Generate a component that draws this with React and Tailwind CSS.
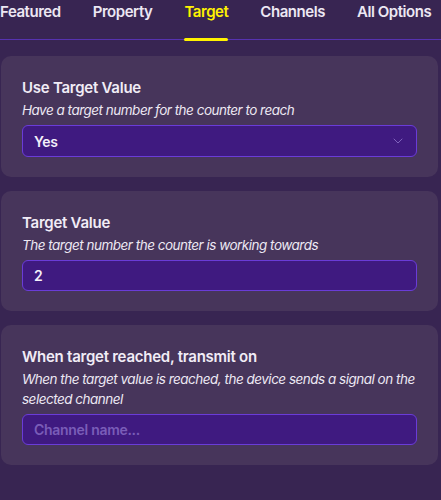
import { ChevronDown } from 'lucide-react'

const TABS = ['Featured', 'Property', 'Target', 'Channels', 'All Options']

function Card({ title, desc, children }) {
  return (
    <div className="mx-[1px] w-[437px] rounded-[10px] bg-[#47355b] px-[21px] pt-[22px] pb-[20px]">
      <h2 className="text-[15px] font-semibold leading-[20px] tracking-[-0.25px] text-[#f1ecf6]">{title}</h2>
      <p className="mt-[2px] text-[13.5px] italic leading-[20px] tracking-[-0.5px] text-[#ede8f3]">{desc}</p>
      <div className="mt-[5px]">{children}</div>
    </div>
  )
}

export default function App() {
  return (
    <div
      className="h-[500px] w-[441px] overflow-hidden bg-[#382552]"
      style={{ fontFamily: 'Inter, "Noto Sans", sans-serif' }}
    >
      {/* tabs */}
      <div className="relative flex h-[40px] gap-[32px] border-b border-[#5632b0] text-[15px] font-semibold tracking-[-0.45px]">
        {TABS.map(t => {
          const on = t === 'Target'
          return (
            <div key={t} className="relative whitespace-nowrap pt-[2px] leading-[20px]">
              <span className={on ? 'text-[#fff200]' : 'text-[#ece7f3]'}>{t}</span>
              {on && <div className="absolute bottom-[-2px] left-0 right-0 h-[3px] rounded-sm bg-[#fff200]" />}
            </div>
          )
        })}
      </div>

      <div className="flex flex-col gap-[14px] pt-[16px]">
        <Card title="Use Target Value" desc="Have a target number for the counter to reach">
          <div className="flex h-[32px] items-center justify-between rounded-[6px] border border-[#6a3cd8] bg-[#3f1a80] pl-[11px] pr-[10px]">
            <span className="text-[14px] font-semibold tracking-[-0.3px] text-[#f4f0fa]">Yes</span>
            <ChevronDown size={16} strokeWidth={1.25} className="text-[#8d71c8]" />
          </div>
        </Card>

        <Card title="Target Value" desc="The target number the counter is working towards">
          <div className="flex h-[31px] items-center rounded-[6px] border border-[#6a3cd8] bg-[#3f1a80] pl-[11px]">
            <span className="text-[14px] font-semibold text-[#f4f0fa]">2</span>
          </div>
        </Card>

        <Card
          title="When target reached, transmit on"
          desc="When the target value is reached, the device sends a signal on the selected channel"
        >
          <div className="flex h-[31px] items-center rounded-[6px] border border-[#6a3cd8] bg-[#3f1a80] pl-[11px]">
            <span className="text-[14px] font-semibold tracking-[-0.3px] text-[#7a5db8]">Channel name...</span>
          </div>
        </Card>
      </div>
    </div>
  )
}
